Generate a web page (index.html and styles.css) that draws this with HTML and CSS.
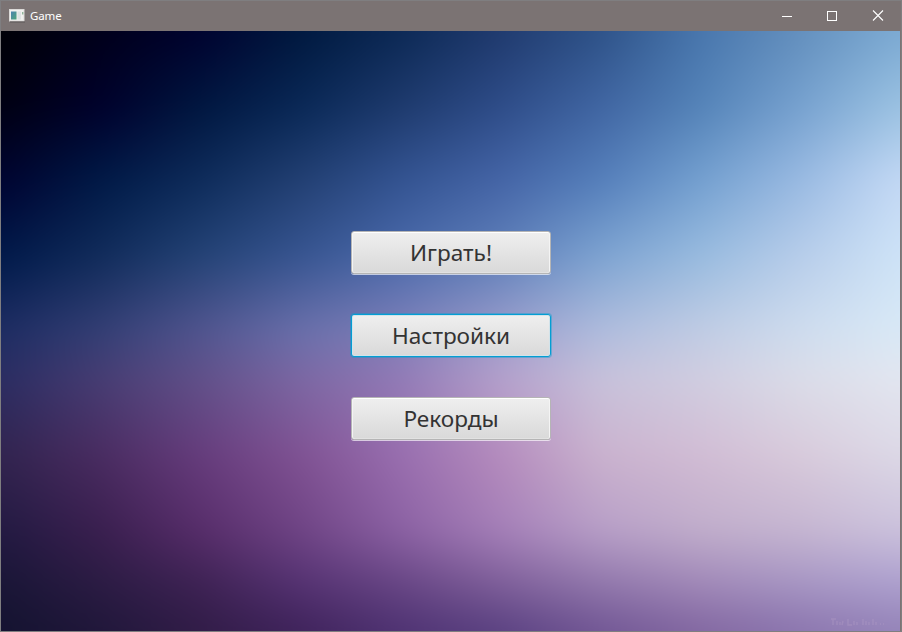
FILE: index.html
```
<!DOCTYPE html>
<html lang="ru">
<head>
<meta charset="utf-8">
<title>Game</title>
<link rel="stylesheet" href="styles.css">
</head>
<body>
<div class="window">
  <header class="titlebar">
    <svg class="app-icon" width="16" height="14" viewBox="0 0 16 14">
      <defs><linearGradient id="pane" x1="0" y1="0" x2="1" y2="1"><stop offset="0" stop-color="#4c83b0"/><stop offset="1" stop-color="#4fa67a"/></linearGradient></defs>
      <rect x=".5" y=".5" width="14.5" height="11.5" fill="#f0f0ee" stroke="#dcdad8"/>
      <rect x="2" y="2.5" width="5.5" height="8" fill="url(#pane)"/>
      <path d="M8.5 2.5h3.5v8H8.5z" fill="#dde2e2"/>
      <path d="M13 3h1.4v2.5H13z" fill="#8fb59a"/>
      <path d="M1 13h15" stroke="#5d5858"/>
    </svg>
    <span class="title">Game</span>
    <div class="controls">
      <svg width="45" height="30" viewBox="0 0 45 30"><path d="M18 15.5h10" stroke="#fff"/></svg>
      <svg width="46" height="30" viewBox="0 0 46 30"><rect x="18.5" y="10.5" width="9" height="9" fill="none" stroke="#fff"/></svg>
      <svg width="46" height="30" viewBox="0 0 46 30"><path d="M18 9.500l10 10M28 9.500l-10 10" stroke="#fff" stroke-width="1.1"/></svg>
    </div>
  </header>
  <main class="scene">
    <div class="backdrop">
      <i></i><i></i><i></i><i></i><i></i><i></i><i></i><i></i><i></i><i></i>
    </div>
    <nav class="menu">
      <button class="item">Играть!</button>
      <button class="item focused">Настройки</button>
      <button class="item">Рекорды</button>
    </nav>
    <svg class="signature" width="56" height="10" viewBox="0 0 56 10"><path d="M3 2v6M1 2h5M7 4v4M10 5v3M13 4l-1 4M18 2v6h4M24 4v4M27 5v3M33 2v6M36 4v4M39 5v3M43 2v6M46 5v3M50 7h1M53 7h1"/></svg>
  </main>
</div>
</body>
</html>
```
FILE: styles.css
```
* { box-sizing: border-box; }
body { margin: 0; font-family: "Noto Sans", "Open Sans", sans-serif; }
.window {
  width: 902px;
  height: 632px;
  display: flex;
  flex-direction: column;
  border: 1px solid #7f7e80;
  background: #7b7373;
  overflow: hidden;
}
.titlebar { height: 30px; flex: none; display: flex; align-items: center; padding-left: 8px; color: #fff; }
.app-icon { flex: none; }
.title { margin-left: 5px; font-size: 11.5px; line-height: 16px; letter-spacing: -.15px; }
.controls { display: flex; margin-left: auto; }
.controls svg { display: block; }
.scene {
  position: relative;
  flex: 1;
  margin-right: 1px;
  padding: 200px 0 0 350px;
  overflow: hidden;
}

/* Horizontal colour rows, each faded in from the row above it.
   The rows bleed 40px past the scene so the softened edges stay hidden. */
.backdrop { position: absolute; inset: -40px; filter: blur(14px); }
.backdrop i {
  position: absolute;
  inset: 0;
  background: linear-gradient(90deg, var(--row));
  -webkit-mask-image: linear-gradient(to bottom, transparent var(--from), #000 var(--to));
  mask-image: linear-gradient(to bottom, transparent var(--from), #000 var(--to));
}
.backdrop i:nth-child(1) { -webkit-mask-image: none; mask-image: none; --row: #000006 40px, #00001a, #00022f, #00193f, #0c2955, #203a6e, #2e5288, #4876ad, #638fbd, #7caad3 calc(100% - 40px); }
.backdrop i:nth-child(2) { --from: 40px; --to: 115px; --row: #000012 40px, #00002c, #001740, #092856, #1e3a6d, #2e4c88, #4065a2, #5483b8, #76a1cf, #9bc2e2 calc(100% - 40px); }
.backdrop i:nth-child(3) { --from: 115px; --to: 190px; --row: #000331 40px, #001a47, #0e2c5b, #234073, #345492, #4565a7, #557fbb, #74a0d0, #99bae2, #c4d9f5 calc(100% - 40px); }
.backdrop i:nth-child(4) { --from: 190px; --to: 265px; --row: #001a4a 40px, #112c5b, #244376, #375591, #4b6aab, #6080ba, #7da3d1, #98bbdf, #b7cdea, #cee3f7 calc(100% - 40px); }
.backdrop i:nth-child(5) { --from: 265px; --to: 340px; --row: #1e2d63 40px, #343f75, #51558f, #6a70ab, #7e80b9, #9a9ccb, #afbcdd, #c0cce4, #cedcee, #d9e9f6 calc(100% - 40px); }
.backdrop i:nth-child(6) { --from: 340px; --to: 390px; --row: #2c2d62 40px, #483d73, #625089, #7d67a3, #937ab6, #b5a0cb, #c8c1da, #d1cde0, #dbdce8, #e3e6f0 calc(100% - 40px); }
.backdrop i:nth-child(7) { --from: 390px; --to: 465px; --row: #32244f 40px, #4a2c61, #663c7c, #805293, #996eaf, #b58bbd, #cab2ce, #d1bcd4, #d8cadb, #dcd8e6 calc(100% - 40px); }
.backdrop i:nth-child(8) { --from: 465px; --to: 540px; --row: #231a42 40px, #3a1f4f, #572d6a, #6f4485, #8b61a3, #a47fb8, #b79ec7, #c0adcb, #c5b5d1, #cbc1dc calc(100% - 40px); }
.backdrop i:nth-child(9) { --from: 540px; --to: 590px; --row: #1a1637 40px, #2c1c44, #3f2355, #563373, #694786, #80609b, #9379ad, #a28ab9, #a897c4, #aea1cf calc(100% - 40px); }
.backdrop i:nth-child(10) { --from: 590px; --to: 640px; --row: #141330 40px, #20173a, #311c47, #3f235b, #4e3272, #5a4181, #715694, #8267a1, #8b75ae, #9483b8 calc(100% - 40px); }

.menu { position: relative; width: 200px; display: flex; flex-direction: column; gap: 40px; }
.item {
  height: 43px;
  margin: 0;
  padding: 0;
  border: 1px solid #b5b5b5;
  border-radius: 3px;
  background: linear-gradient(#efefef, #d9d9d9);
  box-shadow: inset 0 1px #fff, inset 1px 0 #f4f4f4, inset -1px 0 #f4f4f4, inset 0 -1px #e2e2e2, 0 1px rgba(255, 255, 255, .65);
  color: #333;
  font: 22.6px/41px "Noto Sans", "Open Sans", sans-serif;
}
.focused {
  border-color: #039ed3;
  box-shadow: inset 0 0 0 1px #d2e3ea, 0 0 0 1px rgba(3, 158, 211, .4);
}
.signature { position: absolute; right: 14px; bottom: 4px; fill: none; stroke: #b6a0c8; stroke-width: 1.4; opacity: .35; }
```
